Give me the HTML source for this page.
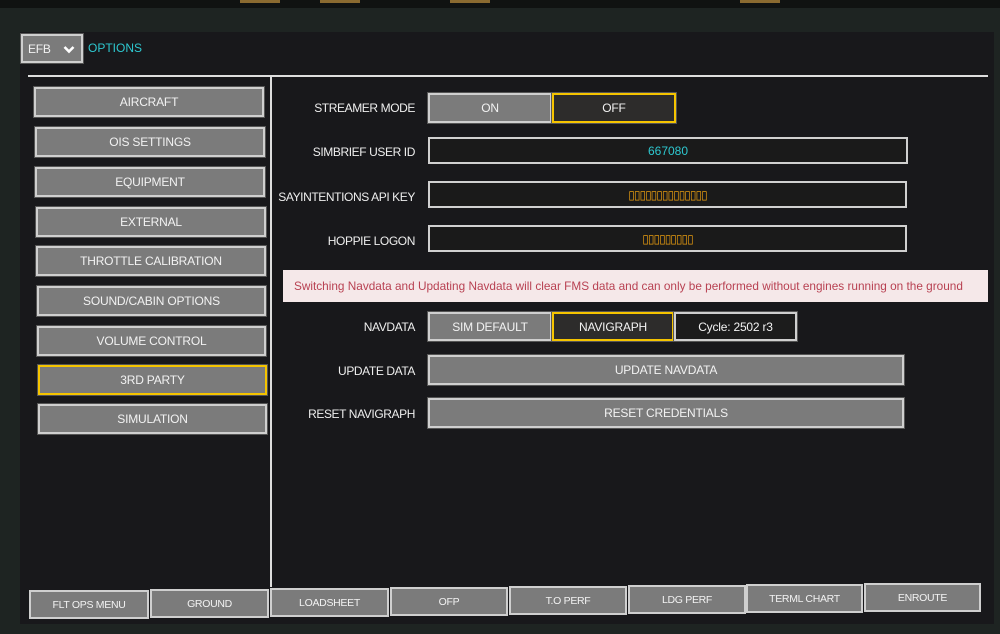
<!DOCTYPE html>
<html><head><meta charset="utf-8"><style>
*{box-sizing:border-box;margin:0;padding:0}
body{width:1000px;height:634px;overflow:hidden;background:#1e2422;font-family:"Liberation Sans",sans-serif;position:relative}
.a{position:absolute}
#scr{left:20px;top:32px;width:974px;height:592px;background:#18181b}
.btn{position:absolute;background:#7b7b7b;border:2px solid #cfcfcf;color:#f2f2f2;font-size:12px;letter-spacing:-0.2px;display:flex;align-items:center;justify-content:center;box-shadow:0 0 0 1px #555}
.sel{border-color:#f5c400}
.dark{background:#2d2c2b}
.fld{position:absolute;background:#1a1a1a;border:2px solid #d0d0d0;display:flex;align-items:center;justify-content:center;font-size:12px}
.lbl{position:absolute;right:585px;color:#eee;font-size:12px;letter-spacing:-0.4px;text-align:right;white-space:nowrap}
.tab{position:absolute;top:588px;height:29px;background:#7b7b7b;border:2px solid #cfcfcf;color:#f2f2f2;font-size:10.5px;letter-spacing:-0.3px;display:flex;align-items:center;justify-content:center}
</style></head><body>
<div class="a" style="left:0;top:0;width:1000px;height:8px;background:#101211"></div>
<div class="a" style="left:240px;top:0;width:40px;height:3px;background:#8a6a30"></div>
<div class="a" style="left:320px;top:0;width:40px;height:3px;background:#8a6a30"></div>
<div class="a" style="left:450px;top:0;width:40px;height:3px;background:#8a6a30"></div>
<div class="a" style="left:740px;top:0;width:40px;height:3px;background:#8a6a30"></div>
<div class="a" id="scr"></div>
<div class="btn" style="left:21px;top:34px;width:62px;height:29px;justify-content:flex-start;padding-left:5px;font-size:12px">EFB
<svg style="position:absolute;right:6px;top:9px" width="12" height="9" viewBox="0 0 12 9"><path d="M1.5 2 L6 6.5 L10.5 2" stroke="#fff" stroke-width="2.6" fill="none"/></svg></div>
<div class="a" style="left:88px;top:41px;color:#2ec8d0;font-size:12px">OPTIONS</div>
<div class="a" style="left:28px;top:75px;width:960px;height:2px;background:#ddd"></div>
<div class="a" style="left:270px;top:77px;width:2px;height:510px;background:#ddd"></div>

<div class="btn" style="left:34px;top:87px;width:230px;height:30px">AIRCRAFT</div>
<div class="btn" style="left:35px;top:127px;width:230px;height:30px">OIS SETTINGS</div>
<div class="btn" style="left:35px;top:167px;width:230px;height:30px">EQUIPMENT</div>
<div class="btn" style="left:36px;top:207px;width:230px;height:30px">EXTERNAL</div>
<div class="btn" style="left:36px;top:246px;width:230px;height:30px">THROTTLE CALIBRATION</div>
<div class="btn" style="left:37px;top:286px;width:229px;height:30px">SOUND/CABIN OPTIONS</div>
<div class="btn" style="left:37px;top:326px;width:229px;height:30px">VOLUME CONTROL</div>
<div class="btn sel" style="left:38px;top:365px;width:229px;height:30px">3RD PARTY</div>
<div class="btn" style="left:38px;top:404px;width:229px;height:30px">SIMULATION</div>

<div class="lbl" style="top:101px">STREAMER MODE</div>
<div class="btn" style="left:428px;top:93px;width:124px;height:30px">ON</div>
<div class="btn sel dark" style="left:552px;top:93px;width:124px;height:30px">OFF</div>
<div class="lbl" style="top:145px">SIMBRIEF USER ID</div>
<div class="fld" style="left:428px;top:137px;width:480px;height:27px;color:#2ec8d0">667080</div>
<div class="lbl" style="top:190px">SAYINTENTIONS API KEY</div>
<div class="fld" style="left:428px;top:181px;width:479px;height:27px;color:#e59a10;letter-spacing:-1px">▯▯▯▯▯▯▯▯▯▯▯▯▯▯</div>
<div class="lbl" style="top:234px">HOPPIE LOGON</div>
<div class="fld" style="left:428px;top:225px;width:479px;height:27px;color:#e59a10;letter-spacing:-1px">▯▯▯▯▯▯▯▯▯</div>

<div class="a" style="left:283px;top:270px;width:705px;height:32px;background:#f5e8e9;color:#b84152;font-size:11.8px;padding:9px 0 0 11px;white-space:nowrap">Switching Navdata and Updating Navdata will clear FMS data and can only be performed without engines running on the ground</div>

<div class="lbl" style="top:320px">NAVDATA</div>
<div class="btn" style="left:428px;top:312px;width:124px;height:29px">SIM DEFAULT</div>
<div class="btn sel dark" style="left:552px;top:312px;width:122px;height:29px">NAVIGRAPH</div>
<div class="btn dark" style="left:674px;top:312px;width:123px;height:29px;background:#1c1c1c">Cycle: 2502 r3</div>
<div class="lbl" style="top:364px">UPDATE DATA</div>
<div class="btn" style="left:428px;top:355px;width:476px;height:30px">UPDATE NAVDATA</div>
<div class="lbl" style="top:407px">RESET NAVIGRAPH</div>
<div class="btn" style="left:428px;top:398px;width:476px;height:30px">RESET CREDENTIALS</div>

<div class="tab" style="left:29px;top:590px;width:120px">FLT OPS MENU</div>
<div class="tab" style="left:150px;top:589px;width:119px">GROUND</div>
<div class="tab" style="left:270px;top:588px;width:119px">LOADSHEET</div>
<div class="tab" style="left:390px;top:587px;width:118px">OFP</div>
<div class="tab" style="left:509px;top:586px;width:118px">T.O PERF</div>
<div class="tab" style="left:628px;top:585px;width:118px">LDG PERF</div>
<div class="tab" style="left:746px;top:584px;width:117px">TERML CHART</div>
<div class="tab" style="left:864px;top:583px;width:117px">ENROUTE</div>
</body></html>
